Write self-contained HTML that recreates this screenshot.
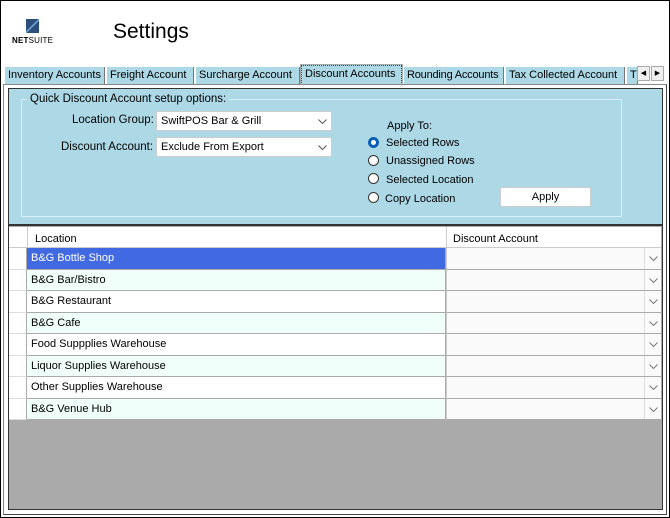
<!DOCTYPE html>
<html><head><style>
*{box-sizing:border-box;margin:0;padding:0}
body{width:670px;height:518px;position:relative;background:#fff;font-family:"Liberation Sans",sans-serif;font-size:11px;color:#000;overflow:hidden}
.a{position:absolute}
.frame{left:0;top:0;width:670px;height:518px;border:1px solid #000}
.tab{position:absolute;top:67px;height:17px;background:#add8e6;border-left:1px solid #fff;border-right:1px solid #777;font-size:11px;line-height:16px;padding-left:3px;white-space:nowrap;overflow:hidden}
.dd{position:absolute;background:#fff;border:1px solid #ccc;height:20px;line-height:18px;padding-left:4px;font-size:11px}
.chev{position:absolute;right:4px;top:7px;width:9px;height:5px}
.rad{position:absolute;width:11px;height:11px;border-radius:50%;border:1px solid #333;background:#fff}
.row{position:absolute;left:9px;width:652px;height:21.5px}
.row .h{position:absolute;left:0;top:0;width:18px;height:100%;background:#fff;border-right:1px solid #aaa;border-bottom:1px solid #ddd}
.row .l{position:absolute;left:18px;top:0;width:419px;height:100%;border-right:1px solid #aaa;border-bottom:1px solid #aaa;padding-left:4px;line-height:21px;font-size:11px}
.row .d{position:absolute;left:437px;top:0;width:215px;height:100%;border-bottom:1px solid #aaa;background:#fafafa;border-left:1px solid #ccc}
.row .d span{position:absolute;right:0;top:0;width:17px;height:100%;border-left:1px solid #ddd}
.row .d svg{position:absolute;left:4px;top:8px}
</style></head><body>
<div class="a frame"></div>
<div class="a" style="left:26px;top:19px;width:13px;height:14px;background:linear-gradient(135deg,#2a4f7a 0 45%,#6b9ed0 45% 55%,#2a4f7a 55%)"></div>
<div class="a" style="left:12px;top:36px;font-size:8px;font-weight:bold;letter-spacing:0.2px">NET<span style="font-weight:normal">SUITE</span></div>
<div class="a" style="left:113px;top:20px;font-size:21px">Settings</div>

<div class="tab" style="left:4px;width:101px">Inventory Accounts</div>
<div class="tab" style="left:106px;width:88px">Freight Account</div>
<div class="tab" style="left:195px;width:105px">Surcharge  Account</div>
<div class="tab" style="left:301px;top:65px;height:20px;width:101px;border:1px dotted #444;outline:1px solid #aaa">Discount Accounts</div>
<div class="tab" style="left:403px;width:101px;letter-spacing:-0.2px">Rounding Accounts</div>
<div class="tab" style="left:505px;width:120px">Tax Collected Account</div>
<div class="tab" style="left:626px;width:12px">T</div>
<div class="a" style="left:637px;top:66px;width:13px;height:15px;border:1px solid #aaa;background:#f0f0f0;font-size:7px;text-align:center;line-height:13px">◀</div>
<div class="a" style="left:651px;top:66px;width:13px;height:15px;border:1px solid #aaa;background:#f0f0f0;font-size:7px;text-align:center;line-height:13px">▶</div>

<div class="a" style="left:3px;top:84px;width:664px;height:431px;border:1px solid #888;border-right-color:#444;border-bottom-color:#444;background:#fff"></div>
<div class="a" style="left:8px;top:88px;width:655px;height:422px;border:1px solid #333;background:#aaaaaa"></div>
<div class="a" style="left:9px;top:89px;width:653px;height:137px;background:#add8e6;border-bottom:2px solid #333"></div>
<div class="a" style="left:21px;top:99px;width:601px;height:118px;border:1px solid #d8eef4"></div>
<div class="a" style="left:27px;top:93px;background:#add8e6;padding:0 3px;font-size:11.5px">Quick Discount Account setup options:</div>
<div class="a" style="left:72px;top:114px;font-size:11.5px">Location Group:</div>
<div class="dd" style="left:156px;top:111px;width:176px">SwiftPOS Bar &amp; Grill<svg class="chev" viewBox="0 0 9 5"><path d="M0.5 0.5L4.5 4.5L8.5 0.5" fill="none" stroke="#555"/></svg></div>
<div class="a" style="left:61px;top:141px;font-size:11.5px">Discount Account:</div>
<div class="dd" style="left:156px;top:137px;width:176px">Exclude From Export<svg class="chev" viewBox="0 0 9 5"><path d="M0.5 0.5L4.5 4.5L8.5 0.5" fill="none" stroke="#555"/></svg></div>
<div class="a" style="left:387px;top:120px;font-size:11px">Apply To:</div>
<div class="rad" style="left:368px;top:137px;border:3px solid #0a5fb4"></div><div class="a" style="left:386px;top:137px">Selected Rows</div>
<div class="rad" style="left:368px;top:155px"></div><div class="a" style="left:386px;top:155px">Unassigned Rows</div>
<div class="rad" style="left:368px;top:173px"></div><div class="a" style="left:386px;top:174px">Selected Location</div>
<div class="rad" style="left:368px;top:192px"></div><div class="a" style="left:385px;top:193px">Copy Location</div>
<div class="a" style="left:500px;top:187px;width:91px;height:20px;background:#fff;border:1px solid #ccc;border-radius:2px;text-align:center;line-height:18px">Apply</div>

<div class="a" style="left:9px;top:227px;width:652px;height:21px;background:#fff;border-bottom:1px solid #ccc"></div>
<div class="a" style="left:27px;top:227px;width:1px;height:21px;background:#ccc"></div>
<div class="a" style="left:446px;top:227px;width:1px;height:21px;background:#ccc"></div>
<div class="a" style="left:35px;top:233px">Location</div>
<div class="a" style="left:453px;top:233px">Discount Account</div>

<div class="row" style="top:248px"><div class="h"></div><div class="l" style="background:#4169e1;color:#fff">B&amp;G Bottle Shop</div><div class="d"><span><svg width="9" height="5" viewBox="0 0 9 5"><path d="M0.5 0.5L4.5 4.5L8.5 0.5" fill="none" stroke="#777"/></svg></span></div></div>
<div class="row" style="top:269.5px"><div class="h"></div><div class="l" style="background:#f0fff9">B&amp;G Bar/Bistro</div><div class="d"><span><svg width="9" height="5" viewBox="0 0 9 5"><path d="M0.5 0.5L4.5 4.5L8.5 0.5" fill="none" stroke="#777"/></svg></span></div></div>
<div class="row" style="top:291px"><div class="h"></div><div class="l" style="background:#fff">B&amp;G Restaurant</div><div class="d"><span><svg width="9" height="5" viewBox="0 0 9 5"><path d="M0.5 0.5L4.5 4.5L8.5 0.5" fill="none" stroke="#777"/></svg></span></div></div>
<div class="row" style="top:312.5px"><div class="h"></div><div class="l" style="background:#f0fff9">B&amp;G Cafe</div><div class="d"><span><svg width="9" height="5" viewBox="0 0 9 5"><path d="M0.5 0.5L4.5 4.5L8.5 0.5" fill="none" stroke="#777"/></svg></span></div></div>
<div class="row" style="top:334px"><div class="h"></div><div class="l" style="background:#fff">Food Suppplies Warehouse</div><div class="d"><span><svg width="9" height="5" viewBox="0 0 9 5"><path d="M0.5 0.5L4.5 4.5L8.5 0.5" fill="none" stroke="#777"/></svg></span></div></div>
<div class="row" style="top:355.5px"><div class="h"></div><div class="l" style="background:#f0fff9">Liquor Supplies Warehouse</div><div class="d"><span><svg width="9" height="5" viewBox="0 0 9 5"><path d="M0.5 0.5L4.5 4.5L8.5 0.5" fill="none" stroke="#777"/></svg></span></div></div>
<div class="row" style="top:377px"><div class="h"></div><div class="l" style="background:#fff">Other Supplies Warehouse</div><div class="d"><span><svg width="9" height="5" viewBox="0 0 9 5"><path d="M0.5 0.5L4.5 4.5L8.5 0.5" fill="none" stroke="#777"/></svg></span></div></div>
<div class="row" style="top:398.5px"><div class="h"></div><div class="l" style="background:#f0fff9">B&amp;G Venue Hub</div><div class="d"><span><svg width="9" height="5" viewBox="0 0 9 5"><path d="M0.5 0.5L4.5 4.5L8.5 0.5" fill="none" stroke="#777"/></svg></span></div></div>
</body></html>
